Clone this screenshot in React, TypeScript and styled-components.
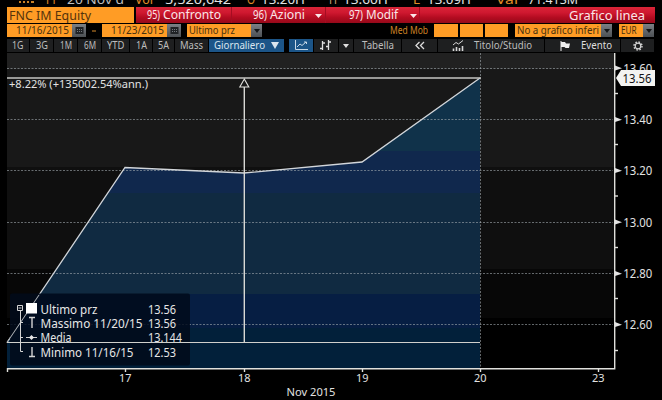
import React from "react";
import styled, { createGlobalStyle } from "styled-components";

const Global = createGlobalStyle`
  * { box-sizing: border-box; }
  body { margin: 0; background: #000; overflow: hidden; }
`;

const Screen = styled.div`
  width: 662px;
  height: 400px;
  background: #000;
  color: #e2e2e2;
  font-family: "Noto Sans", "Open Sans", sans-serif;
  padding-left: 7px;
  display: flex;
  flex-direction: column;
  overflow: hidden;
`;

const Ticker = styled.div`
  height: 7px;
  width: 640px;
  flex: none;
  overflow: hidden;
`;

const TickerSvg = styled.svg`
  display: block;
`;

const Fit = styled.svg`
  display: block;
  flex: none;
  overflow: visible;
`;

interface FitTextProps {
  text: string;
  width: number;
  size: number;
  height: number;
  baseline: number;
  color: string;
}

const FitText = ({ text, width, size, height, baseline, color }: FitTextProps) => (
  <Fit width={width} height={height}>
    <text x={0} y={baseline} fontSize={size} fill={color} textLength={width} lengthAdjust="spacingAndGlyphs">
      {text}
    </text>
  </Fit>
);

const TitleRow = styled.div`
  display: flex;
  height: 17px;
  width: 648px;
  flex: none;
`;

const Security = styled.div`
  width: 127px;
  height: 16px;
  padding-left: 2px;
  background: #ff9c25;
`;

const RedBar = styled.div`
  display: flex;
  flex: 1;
  height: 16px;
  margin-left: 2px;
  background: linear-gradient(#d92537 0, #cf1830 35%, #b40c21 65%, #96091a 100%);
`;

const MenuItem = styled.div<{ $w: number; $pad: number }>`
  display: flex;
  width: ${(p) => p.$w}px;
  padding-left: ${(p) => p.$pad}px;
  gap: 3px;
  border-right: 1px solid #a50d22;
`;

const BarTitle = styled.div`
  margin-left: auto;
  padding-right: 10px;
`;

const FieldRow = styled.div`
  display: flex;
  height: 14px;
  width: 648px;
  flex: none;
`;

const Field = styled.div<{ $w: number; $pad?: number; $ml?: number }>`
  width: ${(p) => p.$w}px;
  height: 13px;
  padding-left: ${(p) => p.$pad ?? 1.5}px;
  margin-left: ${(p) => p.$ml ?? 0}px;
  background: #ff9c25;
  flex: none;
`;

const FieldButton = styled.div<{ $w: number }>`
  width: ${(p) => p.$w}px;
  height: 13px;
  flex: none;
  background: linear-gradient(#7b8085, #4c5054);
  display: flex;
  align-items: center;
  justify-content: center;
`;

const Dash = styled.div`
  width: 16px;
  display: flex;
  align-items: center;
  justify-content: center;
  flex: none;
`;

const Caption = styled.div`
  margin-left: 128px;
  flex: none;
`;

const ToolRow = styled.div`
  display: flex;
  width: 655px;
  height: 15px;
  padding-top: 1px;
  gap: 1px;
  flex: none;
`;

const Tool = styled.div<{ $w: number; $active?: boolean; $ml?: number; $gap?: number; $pl?: number }>`
  width: ${(p) => p.$w}px;
  height: 13px;
  margin-left: ${(p) => p.$ml ?? 0}px;
  padding-left: ${(p) => p.$pl ?? 0}px;
  gap: ${(p) => p.$gap ?? 0}px;
  flex: none;
  display: flex;
  align-items: center;
  justify-content: center;
  background: ${(p) => (p.$active ? "#1c5588" : "#1e1f20")};
`;

const ChartSvg = styled.svg`
  display: block;
  margin-left: -7px;
  flex: none;
`;

const Down = ({ w = 6, h = 4, color = "#eee" }: { w?: number; h?: number; color?: string }) => (
  <svg width={w} height={h}>
    <path d={`M0 0H${w}L${w / 2} ${h}Z`} fill={color} />
  </svg>
);

const Calendar = () => (
  <svg width="9" height="9">
    <path d="M.5 1H8.5V8H.5Z" fill="#202326" />
    <path d="M2 3.5H7M2 5.5H7" stroke="#747a80" strokeDasharray="1 1" />
  </svg>
);

const periods: [string, number, number][] = [
  ["1G", 22, 11.5],
  ["3G", 23, 12],
  ["1M", 23, 12],
  ["6M", 23, 12],
  ["YTD", 27, 17.5],
  ["1A", 22, 11],
  ["5A", 21, 11],
  ["Mass", 33, 23],
];

const prices: [number, string][] = [
  [68, "13.60"],
  [119.5, "13.40"],
  [170.5, "13.20"],
  [222, "13.00"],
  [273.5, "12.80"],
  [324.5, "12.60"],
];
const minorTicks = [93.5, 144.5, 196, 247.5, 298.5, 350.5];

const days: [number, string][] = [
  [125, "17"],
  [244, "18"],
  [362, "19"],
  [480, "20"],
  [598, "23"],
];

const fillBands: [number, number, string][] = [
  [78, 73, "#10324a"],
  [151, 42, "#10284d"],
  [193, 101, "#102a41"],
  [294, 34, "#061e43"],
  [328, 40, "#02203a"],
];

const legend: [number, string, number, string, number][] = [
  [314, "Ultimo prz", 57, "13.56", 28],
  [328.3, "Massimo 11/20/15", 102, "13.56", 28],
  [342.6, "Media", 31, "13.144", 34],
  [357, "Minimo 11/16/15", 93, "12.53", 28],
];

const Chart = () => (
  <ChartSvg width="662" height="347" viewBox="0 53 662 347">
    <defs>
      <clipPath id="area">
        <path d="M7 342.5L125 167.5L244 173L362 162L480 78V368H7Z" />
      </clipPath>
    </defs>
    <rect x="7" y="53" width="607" height="16" fill="#212121" />
    <rect x="7" y="69" width="607" height="98" fill="#181818" />
    <rect x="7" y="167" width="607" height="102" fill="#0f0f0f" />
    <rect x="7" y="269" width="607" height="49" fill="#070707" />

    <g clipPath="url(#area)">
      {fillBands.map(([y, h, c]) => (
        <rect key={y} x="7" y={y} width="474" height={h} fill={c} />
      ))}
    </g>

    <g stroke="#a3abb0" strokeOpacity=".6" strokeDasharray="2 1.5">
      {prices.map(([y]) => (
        <path key={y} d={`M7 ${Math.floor(y) + 0.5}H613`} />
      ))}
      <path d="M480.5 53V368" />
    </g>

    <path d="M7 342.5L125 167.5L244 173L362 162L480 78" fill="none" stroke="#d2d6da" strokeWidth="1.3" />

    <rect x="10" y="293.500" width="180" height="72" rx="2" fill="#010a1a" fillOpacity=".85" />
    <path d="M7 342.5L39 295" stroke="#a9adb1" fill="none" />

    <path d="M7 78H481" stroke="#c4c4c2" strokeWidth="1.5" />
    <path d="M7 342.5H480" stroke="#d0d0cc" strokeWidth="1.2" />
    <path d="M244.300 87V342" stroke="#d8d8d4" strokeWidth="1.4" />
    <path d="M244.300 79L248.800 87H239.800Z" fill="#181818" stroke="#e2e2de" strokeWidth="1.1" />
    <text x="9" y="88" fontSize="10.500" fill="#e2e2e2" textLength="139" lengthAdjust="spacingAndGlyphs">
      +8.22% (+135002.54%ann.)
    </text>

    <g fontSize="12" fill="#e6e6e6">
      {legend.map(([y, label, w, value, vw]) => (
        <g key={label}>
          <text x="40.500" y={y - 0.3} textLength={w} lengthAdjust="spacingAndGlyphs">{label}</text>
          <text x="148" y={y - 0.3} textLength={vw} lengthAdjust="spacingAndGlyphs">{value}</text>
        </g>
      ))}
    </g>
    <rect x="26" y="303" width="11" height="10.500" fill="#fff" />
    <g stroke="#d4d4d4" fill="none">
      <path d="M17.500 305.500H22.500V310.500H17.500ZM18.500 308H21.500" />
      <path d="M20.500 311V351.500H23M20.500 322.500H23M20.500 337.500H23" />
      <path d="M29 317.500H35M32 317V328" strokeWidth="1.4" />
      <path d="M26 337.500H37" />
      <path d="M32 347V356M29 356.500H35" strokeWidth="1.4" />
    </g>
    <path d="M29 337.500L31.500 335L34 337.500L31.500 340Z" fill="#e6e6e6" />

    <g stroke="#e0e0dc" strokeWidth="1.4" fill="none">
      <path d="M7.500 372V368.700H614.700V53" />
      {minorTicks.map((y) => (
        <path key={y} d={`M615 ${y}H618`} />
      ))}
      {days.map(([x]) => (
        <path key={x} d={`M${x + 0.5} 369V372`} />
      ))}
    </g>
    {prices.map(([y, label]) => (
      <g key={label} fill="#e2e2e2">
        <path d={`M615 ${y - 2.500}L622 ${y + 0.300}L615 ${y + 2.500}Z`} />
        <text x="623.300" y={y + 4.900} fontSize="12.500" textLength="29" lengthAdjust="spacingAndGlyphs">{label}</text>
      </g>
    ))}
    <path d="M616 78L621 70H655V86H621Z" fill="#f3f3f1" />
    <text x="622.500" y="82.800" fontSize="12.500" fill="#111" textLength="29" lengthAdjust="spacingAndGlyphs">13.56</text>
    <g fontSize="11.500" fill="#e2e2e2">
      {days.map(([x, label]) => (
        <text key={label} x={x - 6} y="381.500" textLength="12.500" lengthAdjust="spacingAndGlyphs">{label}</text>
      ))}
      <text x="286.500" y="396" textLength="49" lengthAdjust="spacingAndGlyphs">Nov 2015</text>
    </g>
  </ChartSvg>
);

const tickerParts: [number, number, string, string][] = [
  [44, 13, "11", "#e08c28"],
  [67, 57, "20 Nov d", "#bdbdbd"],
  [135, 18, "Vol", "#e08c28"],
  [165, 66, "5,520,642", "#e2e2e2"],
  [247, 8, "O", "#e08c28"],
  [261, 44, "13.20H", "#e2e2e2"],
  [329, 8, "H", "#c9a070"],
  [343, 45, "13.60H", "#e2e2e2"],
  [413, 7, "L", "#e08c28"],
  [427, 44, "13.09H", "#e2e2e2"],
  [496, 22, "Val", "#e08c28"],
  [528, 50, "71.413M", "#e2e2e2"],
];

const menuInk = "#fbe6e8";
const fieldInk = "#46300f";
const toolInk = "#bdbdbd";

export default function App() {
  return (
    <Screen>
      <Global />
      <Ticker>
        <TickerSvg width="640" height="7" viewBox="7 0 640 7">
          <path d="M19 2H21M23 2H25M27 2H29M31 2H34" stroke="#c98228" strokeWidth="2" />
          {tickerParts.map(([x, w, t, c]) => (
            <text key={x} x={x} y="3.900" fontSize="12" fill={c} textLength={w} lengthAdjust="spacingAndGlyphs">{t}</text>
          ))}
        </TickerSvg>
      </Ticker>

      <TitleRow>
        <Security>
          <FitText text="FNC IM Equity" width={82} size={12.5} height={16} baseline={12.8} color="#54330c" />
        </Security>
        <RedBar>
          <MenuItem $w={96} $pad={11}>
            <FitText text="95)" width={13} size={12.5} height={16} baseline={11.5} color={menuInk} />
            <FitText text="Confronto" width={58} size={12.5} height={16} baseline={11.5} color={menuInk} />
          </MenuItem>
          <MenuItem $w={94} $pad={21}>
            <FitText text="96)" width={14} size={12.5} height={16} baseline={11.5} color={menuInk} />
            <FitText text="Azioni" width={35} size={12.5} height={16} baseline={11.5} color={menuInk} />
            <svg width="16" height="16"><path d="M7 7H14L10.5 11Z" fill={menuInk} /></svg>
          </MenuItem>
          <MenuItem $w={94} $pad={23}>
            <FitText text="97)" width={14} size={12.5} height={16} baseline={11.5} color={menuInk} />
            <FitText text="Modif" width={32} size={12.5} height={16} baseline={11.5} color={menuInk} />
            <svg width="18" height="16"><path d="M9 7H16L12.5 11Z" fill={menuInk} /></svg>
          </MenuItem>
          <BarTitle>
            <FitText text="Grafico linea" width={76} size={12.5} height={16} baseline={12.5} color={menuInk} />
          </BarTitle>
        </RedBar>
      </TitleRow>

      <FieldRow>
        <Field $w={65} $pad={9}>
          <FitText text="11/16/2015" width={53} size={10.5} height={13} baseline={9.8} color={fieldInk} />
        </Field>
        <FieldButton $w={14}><Calendar /></FieldButton>
        <Dash><svg width="4" height="2"><path d="M0 1H4" stroke="#d5892a" /></svg></Dash>
        <Field $w={65} $pad={9}>
          <FitText text="11/23/2015" width={53} size={10.5} height={13} baseline={9.8} color={fieldInk} />
        </Field>
        <FieldButton $w={14}><Calendar /></FieldButton>
        <Field $w={64} $ml={6}>
          <FitText text="Ultimo prz" width={46} size={10.5} height={13} baseline={9.8} color={fieldInk} />
        </Field>
        <FieldButton $w={11}><Down color="#151719" /></FieldButton>
        <Caption>
          <FitText text="Med Mob" width={38} size={10} height={13} baseline={9.5} color="#d08425" />
        </Caption>
        <Field $w={24} $ml={6} />
        <Field $w={23} $ml={2} />
        <Field $w={23} $ml={2} />
        <Field $w={86} $ml={7}>
          <FitText text="No a grafico inferi" width={82} size={10.5} height={13} baseline={9.8} color={fieldInk} />
        </Field>
        <FieldButton $w={11}><Down color="#151719" /></FieldButton>
        <Field $w={24} $ml={7}>
          <FitText text="EUR" width={15.5} size={10.5} height={13} baseline={9.8} color={fieldInk} />
        </Field>
        <FieldButton $w={11}><Down color="#151719" /></FieldButton>
      </FieldRow>

      <ToolRow>
        {periods.map(([label, w, tw]) => (
          <Tool key={label} $w={w}>
            <FitText text={label} width={tw} size={10} height={13} baseline={9.6} color={toolInk} />
          </Tool>
        ))}
        <Tool $w={75} $active $gap={6}>
          <FitText text="Giornaliero" width={51} size={10.5} height={13} baseline={9.6} color="#dbe6ef" />
          <Down w={8} h={7} color="#dbe6ef" />
        </Tool>
        <Tool $w={24} $active $ml={4}>
          <svg width="14" height="11" fill="none" stroke="#c8d8e6">
            <path d="M1.500 0V9.500H14M3 7L6 4L8 5.500L12 2M10 2H12.500V4" />
          </svg>
        </Tool>
        <Tool $w={24}>
          <svg width="12" height="11" fill="none" stroke="#e0e0e0" strokeWidth="1.3">
            <path d="M2.500 1V10M0 8.500H2.500M2.500 3H5M8.500 0V10M6 6.500H8.500M8.500 2H11" />
          </svg>
        </Tool>
        <Tool $w={14}><Down color="#e0e0e0" /></Tool>
        <Tool $w={47}>
          <FitText text="Tabella" width={32} size={10.5} height={13} baseline={9.6} color={toolInk} />
        </Tool>
        <Tool $w={35}>
          <svg width="10" height="9" fill="none" stroke="#ddd" strokeWidth="1.3">
            <path d="M4.500 1L1 4.500L4.500 8M9 1L5.500 4.500L9 8" />
          </svg>
        </Tool>
        <Tool $w={106} $gap={10} $pl={2}>
          <svg width="12" height="11" fill="none" stroke="#d8d8d8">
            <path d="M1 5L4 2.500L6.500 4L11 .5" />
            <path d="M1.500 11V8.500M4.500 11V7M7.500 11V8M10.500 11V6" strokeWidth="1.6" />
          </svg>
          <FitText text="Titolo/Studio" width={58} size={10.5} height={13} baseline={9.6} color={toolInk} />
        </Tool>
        <Tool $w={75} $gap={11} $pl={6}>
          <svg width="10" height="10">
            <path d="M1 0V10" stroke="#eee" />
            <path d="M1 1H5L6 2.500H10L9 7H5.500L4.500 6H1Z" fill="#eee" />
          </svg>
          <FitText text="Evento" width={31} size={10.5} height={13} baseline={9.6} color="#dedede" />
        </Tool>
        <Tool $w={33}>
          <svg width="10" height="10" fill="none" stroke="#d5d5d5">
            <circle cx="5" cy="5" r="2.800" strokeWidth="1.2" />
            <circle cx="5" cy="5" r="4" strokeWidth="1.4" strokeDasharray="1.570 1.570" />
          </svg>
        </Tool>
      </ToolRow>

      <Chart />
    </Screen>
  );
}
